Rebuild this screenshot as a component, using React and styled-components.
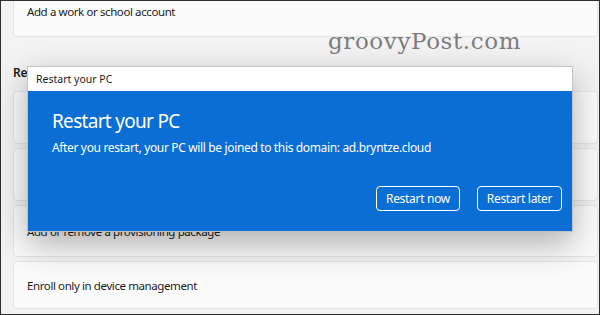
import React from 'react';
import styled, { createGlobalStyle } from 'styled-components';

const GlobalStyle = createGlobalStyle`
html, body {
  margin: 0;
  padding: 0;
  background: #f3f3f3;
}
`;

const Frame = styled.div`
position: relative;
width: 600px;
height: 315px;
box-sizing: border-box;
border: 1px solid #2e2e2e;
overflow: hidden;
background: #f3f3f3;
font-family: "Noto Sans", "Open Sans", sans-serif;
color: #1b1b1b;
`;

const Page = styled.div`
display: flex;
flex-direction: column;
padding: 0 1px 0 12px;
`;

const Card = styled.div`
display: flex;
flex-direction: column;
justify-content: center;
height: ${props => props.height || 53}px;
margin-top: ${props => props.top || 0}px;
padding: 0 13px;
background: #fbfbfb;
border: 1px solid #e6e6e6;
border-radius: 4px;
box-sizing: border-box;
font-size: 11.5px;
letter-spacing: -0.4px;
`;

const SubText = styled.span`
font-size: 10px;
color: #5f5f5f;
`;

const SectionTitle = styled.div`
margin: 27px 0 10px 0;
font-size: 12px;
font-weight: 600;
letter-spacing: -0.3px;
`;

const CardList = styled.div`
display: flex;
flex-direction: column;
gap: 4px;
`;

const Watermark = styled.div`
position: absolute;
left: 327px;
top: 27px;
font-family: "DejaVu Serif", "Liberation Serif", serif;
font-size: 23px;
letter-spacing: 0.6px;
color: #7d7d7d;
`;

const Dialog = styled.div`
position: absolute;
left: 26px;
top: 65px;
width: 546px;
border: 1px solid #c4c4c4;
box-sizing: border-box;
box-shadow: 0 12px 32px rgba(0, 0, 0, 0.3);
display: flex;
flex-direction: column;
`;

const TitleBar = styled.div`
height: 24px;
display: flex;
align-items: center;
padding-left: 8px;
background: #ffffff;
font-size: 10.5px;
color: #1b1b1b;
`;

const Body = styled.div`
background: #0a6ed5;
color: #ffffff;
display: flex;
flex-direction: column;
padding: 16px 10px 20px 24px;
height: 140px;
box-sizing: border-box;
`;

const Heading = styled.div`
font-size: 19px;
font-weight: 400;
line-height: 28px;
letter-spacing: -0.7px;
`;

const Message = styled.div`
margin-top: 4px;
font-size: 12px;
line-height: 17px;
letter-spacing: -0.35px;
`;

const Actions = styled.div`
margin-top: auto;
display: flex;
justify-content: flex-end;
gap: 17px;
`;

const Button = styled.button`
width: ${props => props.width}px;
height: 25px;
background: transparent;
border: 1.5px solid #ffffff;
border-radius: 4px;
color: #ffffff;
font-family: "Noto Sans", "Open Sans", sans-serif;
font-size: 12px;
letter-spacing: -0.3px;
padding: 0;
`;

export default function App() {
    return (
        <Frame>
            <GlobalStyle />
            <Page>
                <Card top={-16} height={52}>Add a work or school account</Card>
                <SectionTitle>Related settings</SectionTitle>
                <CardList>
                    <Card>Create a test-taking account</Card>
                    <Card>
                        Export your management log files
                        <SubText>Log files are exported to a folder</SubText>
                    </Card>
                    <Card height={52}>Add or remove a provisioning package</Card>
                    <Card height={48}>Enroll only in device management</Card>
                </CardList>
            </Page>

            <Watermark>groovyPost.com</Watermark>

            <Dialog>
                <TitleBar>Restart your PC</TitleBar>
                <Body>
                    <Heading>Restart your PC</Heading>
                    <Message>After you restart, your PC will be joined to this domain: ad.bryntze.cloud</Message>
                    <Actions>
                        <Button width={84}>Restart now</Button>
                        <Button width={85}>Restart later</Button>
                    </Actions>
                </Body>
            </Dialog>
        </Frame>
    );
}
